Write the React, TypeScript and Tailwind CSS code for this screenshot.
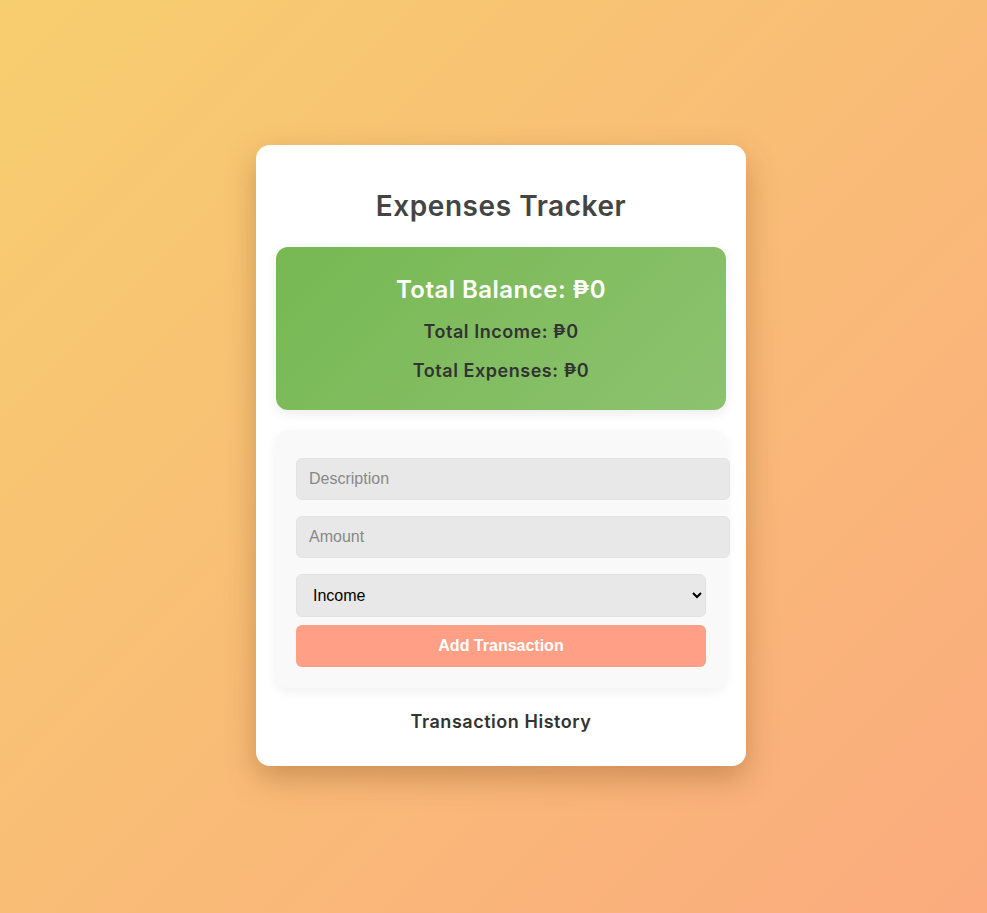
import { useState } from 'react';

const heading = { fontFamily: 'Inter, "DejaVu Sans", sans-serif' };
const arial = { fontFamily: '"Liberation Sans", Arial, sans-serif' };

export default function App() {
  const [desc, setDesc] = useState('');
  const [amount, setAmount] = useState('');
  const [type, setType] = useState('income');

  return (
    <div className="min-h-screen w-full flex items-center justify-center pl-[15px] pb-[2px] bg-[linear-gradient(135deg,#f7ce6f_0%,#fbab7e_100%)]">
      <div className="w-[490px] bg-white rounded-[14px] px-5 pt-5 pb-5 shadow-[0_12px_30px_rgba(120,70,20,0.35)]">
        <h1
          className="mt-[21px] mb-[21px] h-10 leading-10 text-center text-[28px] font-semibold tracking-[0.02em] text-[#444]"
          style={heading}
        >
          Expenses Tracker
        </h1>

        <div className="rounded-xl bg-[linear-gradient(135deg,#76b852_0%,#8dc26f_100%)] pt-[25px] pb-[25px] text-center shadow-[0_4px_12px_rgba(0,0,0,0.08)]" style={heading}>
          <h2 className="h-9 leading-9 text-[24px] font-semibold tracking-[0.02em] text-white">Total Balance: ₱0</h2>
          <p className="mt-[10px] h-7 leading-7 text-[18px] font-semibold tracking-[0.03em] text-[#333]">Total Income: ₱0</p>
          <p className="mt-[11px] h-7 leading-7 text-[18px] font-semibold tracking-[0.03em] text-[#333]">Total Expenses: ₱0</p>
        </div>

        <div className="mt-5 rounded-xl bg-[#f9f9f9] px-5 pt-7 pb-[21px] shadow-[0_4px_12px_rgba(0,0,0,0.06)]" style={arial}>
          <input
            value={desc}
            onChange={e => setDesc(e.target.value)}
            placeholder="Description"
            className="block w-[434px] h-[42px] px-3 rounded-md border border-[#e2e2e2] bg-[#e8e8e8] text-[16px] text-[#333] placeholder:text-[#888] outline-none"
          />
          <input
            value={amount}
            onChange={e => setAmount(e.target.value)}
            placeholder="Amount"
            className="mt-4 block w-[434px] h-[42px] px-3 rounded-md border border-[#e2e2e2] bg-[#e8e8e8] text-[16px] text-[#333] placeholder:text-[#888] outline-none"
          />
          <select
            value={type}
            onChange={e => setType(e.target.value)}
            className="mt-4 block w-[410px] h-[43px] px-3 rounded-md border border-[#e2e2e2] bg-[#e8e8e8] text-[16px] text-black outline-none"
          >
            <option value="income">Income</option>
            <option value="expense">Expense</option>
          </select>
          <button className="mt-2 block w-[410px] h-[42px] rounded-md bg-[#ff9f85] text-white text-[16px] font-bold">
            Add Transaction
          </button>
        </div>

        <h3 className="mt-5 mb-[10px] h-7 leading-7 text-center text-[18px] font-semibold tracking-[0.03em] text-[#333]" style={heading}>
          Transaction History
        </h3>
      </div>
    </div>
  );
}
